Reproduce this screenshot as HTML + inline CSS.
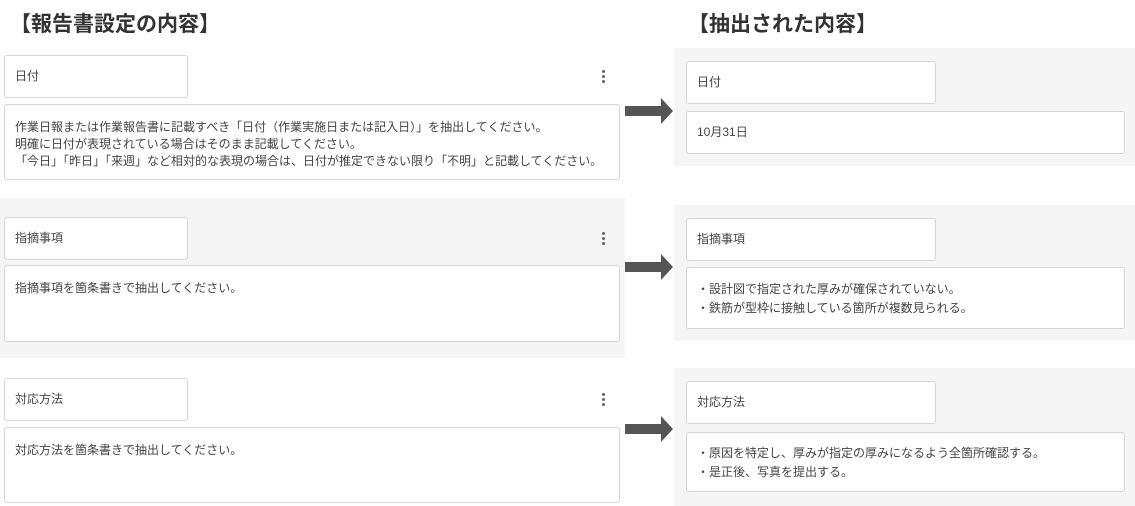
<!DOCTYPE html>
<html><head><meta charset="utf-8"><style>
*{margin:0;padding:0;box-sizing:border-box}
body{width:1135px;height:506px;background:#fff;position:relative;overflow:hidden;font-family:"Liberation Sans","Noto Sans CJK JP",sans-serif;color:#444;font-size:12px}
div,svg{position:absolute}
.h{font-size:21px;font-weight:bold;color:#333;letter-spacing:0px}
.g{background:#f5f5f5}
.b{background:#fff;border:1px solid #d6d6d6;border-radius:3px;padding:0 10px;line-height:17px}
.lab{display:flex;align-items:center}
.dots{width:3px;color:#666}
.dots i{display:block;width:3px;height:3px;border-radius:50%;background:#666;margin-bottom:2px}
.arr{width:48px;height:26px}
</style></head><body>
<div class="h" style="left:10px;top:8px">【報告書設定の内容】</div>
<div class="h" style="left:688px;top:8px">【抽出された内容】</div>

<div class="b lab" style="left:4px;top:55px;width:184px;height:43px">日付</div>
<div class="dots" style="left:602px;top:70px"><i></i><i></i><i></i></div>
<div class="b" style="left:4px;top:104px;width:616px;height:76px;padding-top:14px">作業日報または作業報告書に記載すべき「日付（作業実施日または記入日）」を抽出してください。<br>明確に日付が表現されている場合はそのまま記載してください。<br>「今日」「昨日」「来週」など相対的な表現の場合は、日付が推定できない限り「不明」と記載してください。</div>

<div class="g" style="left:0;top:198px;width:625px;height:160px"></div>
<div class="b lab" style="left:4px;top:217px;width:184px;height:43px">指摘事項</div>
<div class="dots" style="left:602px;top:232px"><i></i><i></i><i></i></div>
<div class="b" style="left:4px;top:265px;width:616px;height:77px;padding-top:14px">指摘事項を箇条書きで抽出してください。</div>

<div class="b lab" style="left:4px;top:378px;width:184px;height:43px">対応方法</div>
<div class="dots" style="left:602px;top:393px"><i></i><i></i><i></i></div>
<div class="b" style="left:4px;top:427px;width:616px;height:76px;padding-top:14px">対応方法を箇条書きで抽出してください。</div>

<div class="g" style="left:674px;top:48px;width:461px;height:118px"></div>
<div class="b lab" style="left:686px;top:61px;width:250px;height:43px">日付</div>
<div class="b lab" style="left:686px;top:111px;width:439px;height:43px">10月31日</div>

<div class="g" style="left:674px;top:205px;width:461px;height:136px"></div>
<div class="b lab" style="left:686px;top:218px;width:250px;height:43px">指摘事項</div>
<div class="b" style="left:686px;top:267px;width:439px;height:62px;padding-top:12px;line-height:19px">・設計図で指定された厚みが確保されていない。<br>・鉄筋が型枠に接触している箇所が複数見られる。</div>

<div class="g" style="left:674px;top:368px;width:461px;height:138px"></div>
<div class="b lab" style="left:686px;top:381px;width:250px;height:43px">対応方法</div>
<div class="b" style="left:686px;top:432px;width:439px;height:60px;padding-top:11px;line-height:19px">・原因を特定し、厚みが指定の厚みになるよう全箇所確認する。<br>・是正後、写真を提出する。</div>

<svg class="arr" style="left:625px;top:98px" viewBox="0 0 48 26"><path d="M0 8H36V0L48 13L36 26V18H0Z" fill="#555"/></svg>
<svg class="arr" style="left:625px;top:254px" viewBox="0 0 48 26"><path d="M0 8H36V0L48 13L36 26V18H0Z" fill="#555"/></svg>
<svg class="arr" style="left:625px;top:416px" viewBox="0 0 48 26"><path d="M0 8H36V0L48 13L36 26V18H0Z" fill="#555"/></svg>
</body></html>
